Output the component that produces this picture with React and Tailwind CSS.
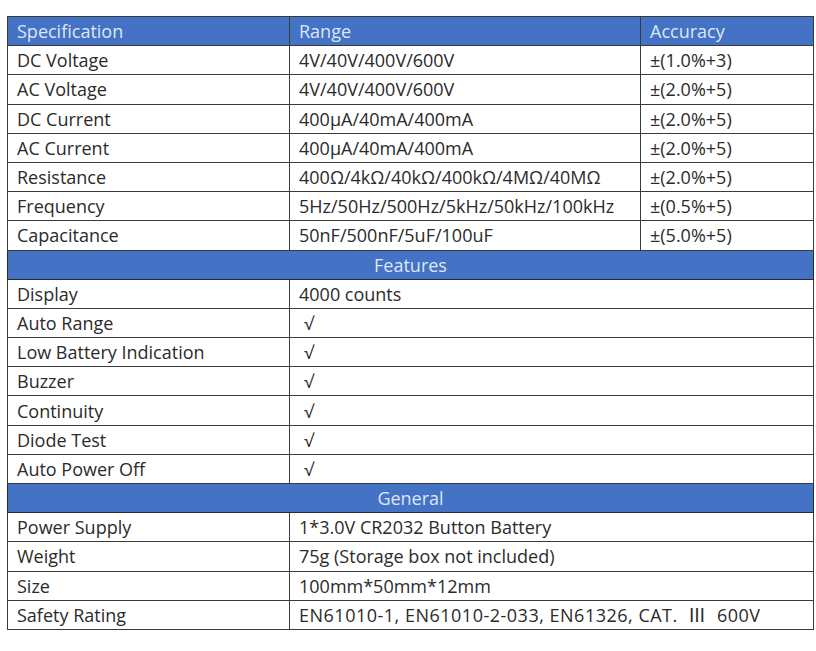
import React from 'react';

const specs = [
  ['DC Voltage', '4V/40V/400V/600V', '±(1.0%+3)'],
  ['AC Voltage', '4V/40V/400V/600V', '±(2.0%+5)'],
  ['DC Current', '400μA/40mA/400mA', '±(2.0%+5)'],
  ['AC Current', '400μA/40mA/400mA', '±(2.0%+5)'],
  ['Resistance', '400Ω/4kΩ/40kΩ/400kΩ/4MΩ/40MΩ', '±(2.0%+5)'],
  ['Frequency', '5Hz/50Hz/500Hz/5kHz/50kHz/100kHz', '±(0.5%+5)'],
  ['Capacitance', '50nF/500nF/5uF/100uF', '±(5.0%+5)'],
];

const features = [
  ['Display', '4000 counts'],
  ['Auto Range', '√'],
  ['Low Battery Indication', '√'],
  ['Buzzer', '√'],
  ['Continuity', '√'],
  ['Diode Test', '√'],
  ['Auto Power Off', '√'],
];

const general = [
  ['Power Supply', '1*3.0V CR2032 Button Battery'],
  ['Weight', '75g (Storage box not included)'],
  ['Size', '100mm*50mm*12mm'],
  ['Safety Rating', 'EN61010-1, EN61010-2-033, EN61326, CAT.  Ⅲ  600V'],
];

const cell = 'border border-[#3a3a3a] pl-[9px] pr-1 align-middle whitespace-nowrap';

const SectionRow = ({ title }) => (
  <tr className="h-[29.2px] bg-[#4472c4]">
    <td colSpan={3} className="border border-[#2a2a2a] text-center text-[#dde7f7]">
      {title}
    </td>
  </tr>
);

const App = () => {
  return (
    <div
      className="w-[816px] h-[651px] bg-white pt-[16px] pl-[7px]"
      style={{ fontFamily: '"Open Sans", "Noto Sans CJK SC", sans-serif' }}
    >
      <table className="w-[806px] border-collapse table-fixed text-[18px] leading-none text-[#2b2b2b]">
        <colgroup>
          <col className="w-[282px]" />
          <col className="w-[351px]" />
          <col className="w-[173px]" />
        </colgroup>
        <tbody>
          <tr className="h-[29.2px] bg-[#4472c4] text-[#dde7f7]">
            <td className={cell}>Specification</td>
            <td className={cell}>Range</td>
            <td className={cell}>Accuracy</td>
          </tr>
          {specs.map(([name, range, acc]) => (
            <tr key={name} className="h-[29.2px]">
              <td className={cell}>{name}</td>
              <td className={cell}>{range}</td>
              <td className={cell}>{acc}</td>
            </tr>
          ))}
          <SectionRow title="Features" />
          {features.map(([name, value]) => (
            <tr key={name} className="h-[29.2px]">
              <td className={cell}>{name}</td>
              <td colSpan={2} className={value === '√' ? cell + ' pl-[14px]' : cell}>
                {value}
              </td>
            </tr>
          ))}
          <SectionRow title="General" />
          {general.map(([name, value]) => (
            <tr key={name} className="h-[29.2px]">
              <td className={cell}>{name}</td>
              <td
                colSpan={2}
                className={cell + ' whitespace-pre' + (name === 'Safety Rating' ? ' tracking-[0.5px]' : '')}
              >
                {value}
              </td>
            </tr>
          ))}
        </tbody>
      </table>
    </div>
  );
};

export default App;
